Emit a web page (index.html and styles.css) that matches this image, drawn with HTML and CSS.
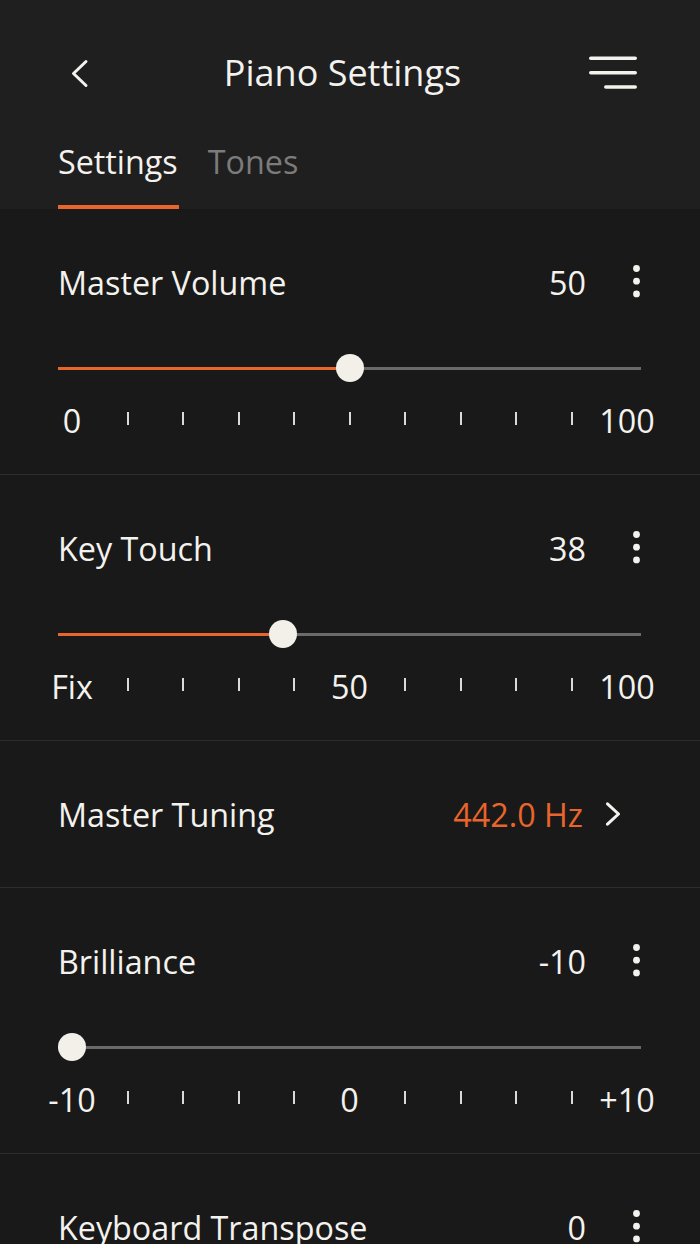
FILE: index.html
```html
<!DOCTYPE html>
<html>
<head>
    <meta charset="utf-8">
    <title>Piano Settings</title>
    <link rel="stylesheet" href="styles.css">
</head>
<body>
    <div class="header">
        <div class="topbar">
            <button class="icon-btn back" type="button" aria-label="Back">
                <svg width="44" height="44" viewBox="0 0 44 44"><path d="M28 10.5 L15.5 22.5 L28 34.5" fill="none" stroke="#f4f2ee" stroke-width="3" stroke-linecap="round" stroke-linejoin="round"/></svg>
            </button>
            <h1 class="title">Piano Settings</h1>
            <button class="icon-btn menu" type="button" aria-label="Menu">
                <svg width="48" height="44" viewBox="0 0 48 44">
                    <rect x="0" y="5.5" width="48" height="3.6" rx="1.8" fill="#f4f2ee"/>
                    <rect x="0" y="20" width="48" height="3.6" rx="1.8" fill="#f4f2ee"/>
                    <rect x="15" y="34.2" width="33" height="3.6" rx="1.8" fill="#f4f2ee"/>
                </svg>
            </button>
        </div>
        <div class="tabs">
            <a class="tab active" href="#">Settings</a>
            <a class="tab" href="#">Tones</a>
        </div>
    </div>

    <div class="setting">
        <div class="setting-head">
            <span class="name">Master Volume</span>
            <span class="value">50</span>
            <span class="more"><svg width="9" height="44" viewBox="0 0 9 44"><circle cx="4.5" cy="8.5" r="3.4"/><circle cx="4.5" cy="21.2" r="3.4"/><circle cx="4.5" cy="33.9" r="3.4"/></svg></span>
        </div>
        <div class="slider" style="--pos: .5">
            <div class="track"><div class="fill"></div></div>
            <div class="thumb"></div>
        </div>
        <div class="scale">
            <span class="mark"><span class="label">0</span></span>
            <span class="mark"><span class="tick"></span></span>
            <span class="mark"><span class="tick"></span></span>
            <span class="mark"><span class="tick"></span></span>
            <span class="mark"><span class="tick"></span></span>
            <span class="mark"><span class="tick"></span></span>
            <span class="mark"><span class="tick"></span></span>
            <span class="mark"><span class="tick"></span></span>
            <span class="mark"><span class="tick"></span></span>
            <span class="mark"><span class="tick"></span></span>
            <span class="mark"><span class="label">100</span></span>
        </div>
    </div>

    <div class="setting">
        <div class="setting-head">
            <span class="name">Key Touch</span>
            <span class="value">38</span>
            <span class="more"><svg width="9" height="44" viewBox="0 0 9 44"><circle cx="4.5" cy="8.5" r="3.4"/><circle cx="4.5" cy="21.2" r="3.4"/><circle cx="4.5" cy="33.9" r="3.4"/></svg></span>
        </div>
        <div class="slider" style="--pos: .38">
            <div class="track"><div class="fill"></div></div>
            <div class="thumb"></div>
        </div>
        <div class="scale">
            <span class="mark"><span class="label">Fix</span></span>
            <span class="mark"><span class="tick"></span></span>
            <span class="mark"><span class="tick"></span></span>
            <span class="mark"><span class="tick"></span></span>
            <span class="mark"><span class="tick"></span></span>
            <span class="mark"><span class="label">50</span></span>
            <span class="mark"><span class="tick"></span></span>
            <span class="mark"><span class="tick"></span></span>
            <span class="mark"><span class="tick"></span></span>
            <span class="mark"><span class="tick"></span></span>
            <span class="mark"><span class="label">100</span></span>
        </div>
    </div>

    <a class="setting link" href="#">
        <div class="setting-head">
            <span class="name">Master Tuning</span>
            <span class="value accent">442.0 Hz</span>
            <svg class="chevron" width="16" height="24" viewBox="0 0 16 24"><path d="M2.5 1.8 L13.5 12 L2.5 22.2" fill="none" stroke="#f4f2ee" stroke-width="3" stroke-linecap="round" stroke-linejoin="round"/></svg>
        </div>
    </a>

    <div class="setting">
        <div class="setting-head">
            <span class="name">Brilliance</span>
            <span class="value">-10</span>
            <span class="more"><svg width="9" height="44" viewBox="0 0 9 44"><circle cx="4.5" cy="8.5" r="3.4"/><circle cx="4.5" cy="21.2" r="3.4"/><circle cx="4.5" cy="33.9" r="3.4"/></svg></span>
        </div>
        <div class="slider" style="--pos: 0">
            <div class="track"><div class="fill"></div></div>
            <div class="thumb"></div>
        </div>
        <div class="scale">
            <span class="mark"><span class="label">-10</span></span>
            <span class="mark"><span class="tick"></span></span>
            <span class="mark"><span class="tick"></span></span>
            <span class="mark"><span class="tick"></span></span>
            <span class="mark"><span class="tick"></span></span>
            <span class="mark"><span class="label">0</span></span>
            <span class="mark"><span class="tick"></span></span>
            <span class="mark"><span class="tick"></span></span>
            <span class="mark"><span class="tick"></span></span>
            <span class="mark"><span class="tick"></span></span>
            <span class="mark"><span class="label">+10</span></span>
        </div>
    </div>

    <div class="setting">
        <div class="setting-head">
            <span class="name">Keyboard Transpose</span>
            <span class="value">0</span>
            <span class="more"><svg width="9" height="44" viewBox="0 0 9 44"><circle cx="4.5" cy="8.5" r="3.4"/><circle cx="4.5" cy="21.2" r="3.4"/><circle cx="4.5" cy="33.9" r="3.4"/></svg></span>
        </div>
    </div>
</body>
</html>
```

FILE: styles.css
```css
body {
  margin: 0;
  background-color: #191919;
  color: #f4f2ee;
  font-family: "Open Sans", "Noto Sans", sans-serif;
}
.header {
  background-color: #1f1f1f;
  padding: 51px 0 0;
}
.topbar {
  display: flex;
  align-items: center;
  height: 44px;
  padding: 0 63px 0 58px;
}
.icon-btn {
  display: block;
  padding: 0;
  margin: 0;
  border: 0;
  background: none;
  line-height: 0;
}
.back {
  width: 44px;
}
.menu {
  width: 48px;
}
.title {
  flex: 1;
  margin: 0;
  padding-right: 6px;
  text-align: center;
  font-size: 36px;
  font-weight: 400;
  line-height: 44px;
}
.tabs {
  display: flex;
  gap: 29px;
  margin-top: 44px;
  padding: 0 58px;
}
.tab {
  display: block;
  padding: 0 1px 22px 0;
  border-bottom: 4px solid transparent;
  color: #7b7b7b;
  font-size: 32.3px;
  line-height: 44px;
  text-decoration: none;
}
.tab.active {
  color: #f4f2ee;
  border-bottom-color: #e8652b;
}

.setting {
  display: block;
  padding: 51px 59px 38px 58px;
  border-bottom: 1px solid #2c2c2c;
  color: inherit;
  text-decoration: none;
}
.setting.link {
  padding-bottom: 51px;
}
.setting-head {
  display: flex;
  align-items: center;
  height: 44px;
  font-size: 32.3px;
  line-height: 44px;
}
.setting-head .name {
  flex: 1;
  white-space: nowrap;
}
.setting-head .value.accent {
  color: #e8652b;
}
.more {
  width: 9px;
  margin-left: 46px;
  line-height: 0;
  fill: #f4f2ee;
}
.chevron {
  display: block;
  margin: 0 20px 0 22px;
}

.slider {
  position: relative;
  display: flex;
  align-items: center;
  height: 28px;
  margin-top: 50px;
}
.track {
  flex: 1;
  height: 3px;
  background-color: #6a6a6a;
}
.fill {
  width: calc(14px + (100% - 28px) * var(--pos));
  height: 100%;
  background-color: #e8652b;
}
.thumb {
  position: absolute;
  top: 0;
  left: calc((100% - 28px) * var(--pos));
  width: 28px;
  height: 28px;
  border-radius: 50%;
  background-color: #f3f0ea;
}

.scale {
  display: flex;
  justify-content: space-between;
  height: 32px;
  margin-top: 22px;
  padding: 0 14px;
}
.mark {
  display: flex;
  justify-content: center;
  align-items: flex-start;
  width: 0;
}
.label {
  font-size: 32.3px;
  line-height: 32px;
  white-space: nowrap;
}
.tick {
  flex: none;
  width: 2px;
  height: 13px;
  margin-top: 8px;
  background-color: #dcdad6;
}
```
